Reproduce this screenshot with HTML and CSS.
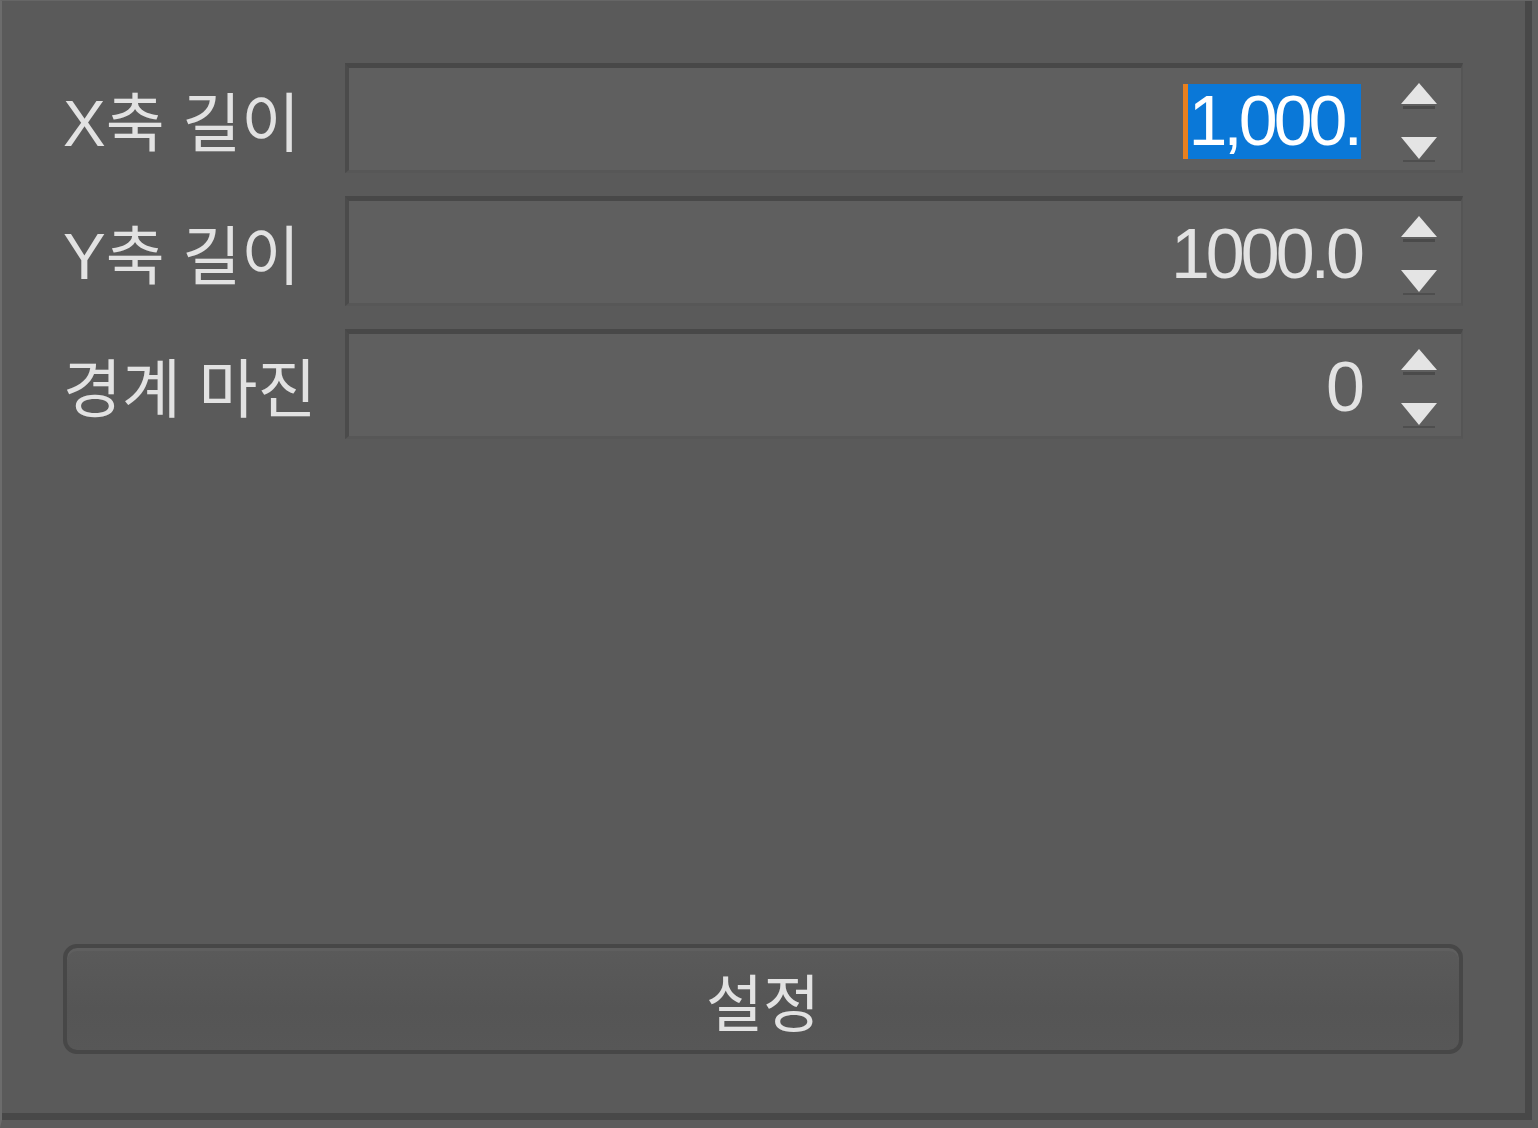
FILE: index.html
```html
<!DOCTYPE html>
<html lang="ko">
<head>
	<meta charset="UTF-8">
	<title>크기 설정</title>
	<link rel="stylesheet" href="styles.css">
</head>
<body>
	<div class="window">
		<div class="panel">
			<div class="form">
				<label class="label">X축 길이</label>
				<div class="spin">
					<div class="value"><span class="caret"></span><span class="sel">1,000.</span></div>
					<div class="arrows">
						<svg width="40" height="84" viewBox="0 0 40 84">
							<rect x="4" y="25" width="32" height="3" fill="#4a4a4a"/>
							<polygon points="20,2 38,23 2,23" fill="#e4e4e4"/>
							<polygon points="2,56 38,56 20,78" fill="#e4e4e4"/>
							<rect x="4" y="79" width="32" height="2" fill="#4e4e4e"/>
						</svg>
					</div>
				</div>

				<label class="label">Y축 길이</label>
				<div class="spin">
					<div class="value">1000.0</div>
					<div class="arrows">
						<svg width="40" height="84" viewBox="0 0 40 84">
							<rect x="4" y="25" width="32" height="3" fill="#4a4a4a"/>
							<polygon points="20,2 38,23 2,23" fill="#e4e4e4"/>
							<polygon points="2,56 38,56 20,78" fill="#e4e4e4"/>
							<rect x="4" y="79" width="32" height="2" fill="#4e4e4e"/>
						</svg>
					</div>
				</div>

				<label class="label">경계 마진</label>
				<div class="spin">
					<div class="value">0</div>
					<div class="arrows">
						<svg width="40" height="84" viewBox="0 0 40 84">
							<rect x="4" y="25" width="32" height="3" fill="#4a4a4a"/>
							<polygon points="20,2 38,23 2,23" fill="#e4e4e4"/>
							<polygon points="2,56 38,56 20,78" fill="#e4e4e4"/>
							<rect x="4" y="79" width="32" height="2" fill="#4e4e4e"/>
						</svg>
					</div>
				</div>
			</div>

			<button class="btn">설정</button>
		</div>
	</div>
</body>
</html>
```

FILE: styles.css
```css
*{margin: 0; padding: 0; box-sizing: border-box;}
html, body{width: 1538px; height: 1128px; overflow: hidden; background: #5b5b5b;}
body{font-family: "Liberation Sans", "Noto Sans CJK KR", sans-serif; color: #e2e2e2;}

.window{width: 1538px; height: 1128px; border-left: 2px solid #6c6c6c; border-top: 1px solid #666; border-right: 6px solid #5e5e5e; border-bottom: 8px solid #5c5c5c;}
.panel{height: 100%; display: flex; flex-direction: column; padding: 62px 62px 59px 61px; background: #5a5a5a; border-right: 7px solid #484848; border-bottom: 7px solid #484848;}

.form{display: grid; grid-template-columns: 282px 1fr; row-gap: 23px; align-items: center;}
.label{font-size: 64px; letter-spacing: 0; line-height: 1; white-space: nowrap; padding-top: 12px;}

.spin{display: flex; align-items: center; height: 110px; background: #5f5f5f; border-top: 5px solid #484848; border-left: 4px solid #4b4b4b; border-right: 2px solid #555; border-bottom: 3px solid #575757;}
.value{flex: 1; text-align: right; font-size: 70px; letter-spacing: -4px; line-height: 75px; padding-right: 2px; padding-top: 4px; display: flex; justify-content: flex-end; align-items: center;}
.caret{width: 5px; height: 75px; background: #e8801f;}
.sel{background: #0a78d8; color: #fff; height: 75px; padding-right: 2px;}
.arrows{width: 98px; display: flex; justify-content: center; padding-left: 14px; padding-top: 8px;}
.arrows svg{display: block;}

.btn{margin-top: auto; height: 110px; width: 100%; border: 4px solid #474747; border-radius: 14px; background: linear-gradient(#5a5a5a, #555 60%, #575757); color: #e2e2e2; font-family: "Noto Sans CJK KR", sans-serif; font-size: 62px; letter-spacing: 0; padding-top: 2px; box-shadow: inset 0 3px 0 #5f5f5f;}
```
